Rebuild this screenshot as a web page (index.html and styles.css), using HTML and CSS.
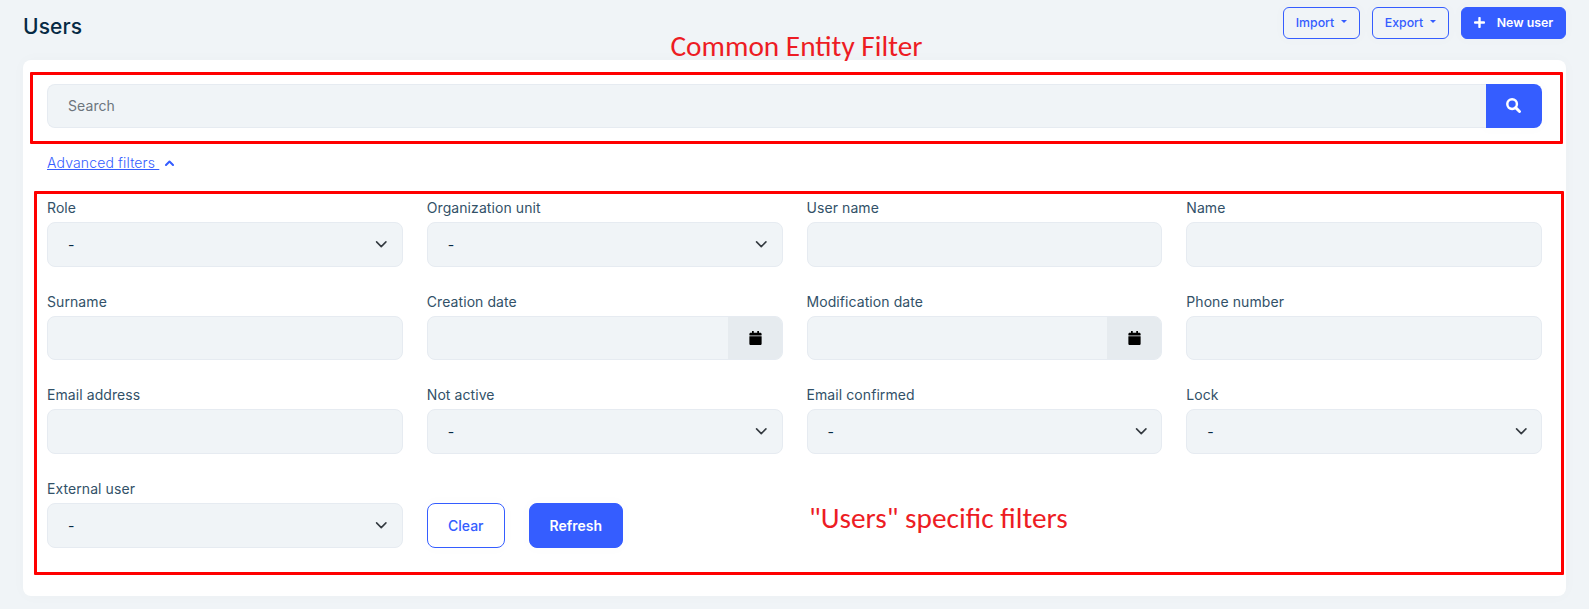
FILE: index.html
```html
<!DOCTYPE html>
<html lang="en">
<head>
<meta charset="utf-8">
<title>Users</title>
<link rel="stylesheet" href="styles.css">
</head>
<body>
<svg class="defs" width="0" height="0">
  <symbol id="calendar" viewBox="0 0 448 512"><path d="M12 192h424c6.600 0 12 5.400 12 12v260c0 26.500-21.500 48-48 48H48c-26.500 0-48-21.500-48-48V204c0-6.600 5.400-12 12-12zm436-44v-36c0-26.500-21.500-48-48-48h-48V12c0-6.600-5.400-12-12-12h-40c-6.600 0-12 5.400-12 12v52H160V12c0-6.600-5.400-12-12-12h-40c-6.600 0-12 5.400-12 12v52H48C21.500 64 0 85.500 0 112v36c0 6.600 5.400 12 12 12h424c6.600 0 12-5.400 12-12z"/></symbol>
  <symbol id="chevron" viewBox="0 0 16 16"><path d="M2 5l6 6 6-6" fill="none" stroke="#343a40" stroke-width="2" stroke-linecap="round" stroke-linejoin="round"/></symbol>
</svg>
<header class="header">
  <h1 class="title">Users</h1>
  <div class="actions">
    <button class="btn small outline">Import<span class="caret"></span></button>
    <button class="btn small outline">Export<span class="caret"></span></button>
    <button class="btn small primary new-user"><svg width="11" height="11" viewBox="0 0 11 11"><path d="M5.500 1v9M1 5.500h9" stroke="#fff" stroke-width="2.400" stroke-linecap="round"/></svg>New user</button>
  </div>
</header>
<main class="card">
  <div class="search">
    <div class="search-input">Search</div>
    <button class="search-button"><svg width="15" height="15" viewBox="0 0 14 14"><circle cx="5.700" cy="5.700" r="4.500" fill="none" stroke="#fff" stroke-width="2.300"/><path d="M9 9l3.600 3.600" stroke="#fff" stroke-width="2.700" stroke-linecap="round"/></svg></button>
  </div>
  <div class="advanced"><a class="link">Advanced filters&nbsp;</a><svg width="9" height="6" viewBox="0 0 9 6"><path d="M1 5l3.500-3.500L8 5" fill="none" stroke="#355dff" stroke-width="2" stroke-linecap="round" stroke-linejoin="round"/></svg></div>
  <div class="filters">
    <div class="field"><label class="label">Role</label><div class="control">-<svg class="chevron"><use href="#chevron"/></svg></div></div>
    <div class="field"><label class="label">Organization unit</label><div class="control">-<svg class="chevron"><use href="#chevron"/></svg></div></div>
    <div class="field"><label class="label">User name</label><div class="control"></div></div>
    <div class="field"><label class="label">Name</label><div class="control"></div></div>
    <div class="field"><label class="label">Surname</label><div class="control input"></div></div>
    <div class="field"><label class="label">Creation date</label><div class="control input date"><span class="addon"><svg class="calendar"><use href="#calendar"/></svg></span></div></div>
    <div class="field"><label class="label">Modification date</label><div class="control input date"><span class="addon"><svg class="calendar"><use href="#calendar"/></svg></span></div></div>
    <div class="field"><label class="label">Phone number</label><div class="control input"></div></div>
    <div class="field"><label class="label">Email address</label><div class="control"></div></div>
    <div class="field"><label class="label">Not active</label><div class="control">-<svg class="chevron"><use href="#chevron"/></svg></div></div>
    <div class="field"><label class="label">Email confirmed</label><div class="control">-<svg class="chevron"><use href="#chevron"/></svg></div></div>
    <div class="field"><label class="label">Lock</label><div class="control">-<svg class="chevron"><use href="#chevron"/></svg></div></div>
    <div class="field"><label class="label">External user</label><div class="control">-<svg class="chevron"><use href="#chevron"/></svg></div></div>
    <div class="buttons"><button class="btn outline clear">Clear</button><button class="btn primary refresh">Refresh</button></div>
  </div>
</main>
<div class="mark mark-common"></div>
<div class="mark mark-specific"></div>
<div class="note note-common">Common Entity Filter</div>
<div class="note note-specific">"Users" specific filters</div>
</body>
</html>
```

FILE: styles.css
```css
* { box-sizing: border-box; }
body {
  margin: 0;
  height: 609px;
  overflow: hidden;
  position: relative;
  background: #f0f4f7;
  font: 400 14px/21px Inter, sans-serif;
  color: #325168;
}
.defs { position: absolute; }
.header {
  height: 60px;
  padding: 7px 23px 0;
  display: flex;
  justify-content: space-between;
  align-items: flex-start;
}
.title {
  margin: 4px 0 0;
  font-size: 21px;
  line-height: 32px;
  font-weight: 550;
  letter-spacing: .1px;
  color: #062a44;
}
.actions { display: flex; gap: 12px; }
.btn {
  display: flex;
  align-items: center;
  justify-content: center;
  padding: 0;
  height: 45px;
  border: 1px solid #355dff;
  border-radius: 8px;
  font: 500 14px/21px Inter, sans-serif;
  box-shadow: 0 0 12px 6px rgba(18, 38, 63, .006);
}
.outline { color: #355dff; background: transparent; }
.primary { color: #fff; background: #355dff; font-weight: 600; }
.small { width: 77px; height: 32px; padding-bottom: 2px; font-size: 12.35px; border-radius: 6px; }
.new-user { width: 105px; gap: 12px; }
.caret {
  margin: -2px 0 0 7px;
  border: 3px solid transparent;
  border-top-color: #355dff;
  border-bottom: 0;
}
.card {
  margin: 0 23px;
  height: 536px;
  padding: 24px;
  border-radius: 8px;
  background: #fff;
  box-shadow: 0 0 15px rgba(18, 38, 63, .025);
}
.search { display: flex; height: 44px; }
.search-input {
  flex: 1;
  padding: 10px 20px;
  border: 1px solid #e6ebf1;
  border-right: 0;
  border-radius: 8px 0 0 8px;
  background: #f0f4f7;
  color: #6c757d;
  letter-spacing: .08px;
}
.search-button {
  width: 56px;
  padding: 0 1px 1px 0;
  border: 0;
  border-radius: 0 8px 8px 0;
  background: #355dff;
  display: flex;
  align-items: center;
  justify-content: center;
  box-shadow: 0 0 12px 6px rgba(18, 38, 63, .006);
}
.advanced {
  margin-top: 24px;
  height: 21px;
  display: flex;
  align-items: center;
  gap: 6px;
  color: #355dff;
}
.link { text-decoration: underline; font-weight: 300; letter-spacing: .15px; }
.filters {
  margin-top: 24.200px;
  display: grid;
  grid-template-columns: repeat(4, 1fr);
  grid-auto-rows: 93.600px;
  column-gap: 24px;
}
.label { display: block; height: 25px; line-height: 21px; letter-spacing: .08px; }
.control {
  height: 44.600px;
  padding: 0 14px 0 20px;
  border: 1px solid #e6ebf1;
  border-radius: 8px;
  background: #f0f4f7;
  color: #062a44;
  display: flex;
  align-items: center;
  justify-content: space-between;
}
.input { height: 44px; }
.date { padding: 0; justify-content: flex-end; }
.addon {
  width: 54px;
  height: 42px;
  border-radius: 0 7px 7px 0;
  background: #e6ebef;
  display: flex;
  align-items: center;
  justify-content: center;
  padding: 1px 0 0 1px;
}
.chevron { width: 12.500px; height: 12.500px; }
.calendar { width: 13px; height: 14px; fill: #000; }
.buttons { display: flex; gap: 24px; padding-top: 25px; }
.clear { width: 78px; }
.refresh { width: 94px; }
.mark { position: absolute; border: 3px solid #f00; border-radius: 1px; }
.mark-common { left: 30px; top: 72px; width: 1533px; height: 72px; }
.mark-specific { left: 34px; top: 191px; width: 1530px; height: 384px; }
.note {
  position: absolute;
  font: 400 29.300px/32px Carlito, Lato, sans-serif;
  color: #ed1c24;
  white-space: nowrap;
}
.note-common { left: 670.500px; top: 30px; }
.note-specific { left: 809px; top: 502px; }
```
